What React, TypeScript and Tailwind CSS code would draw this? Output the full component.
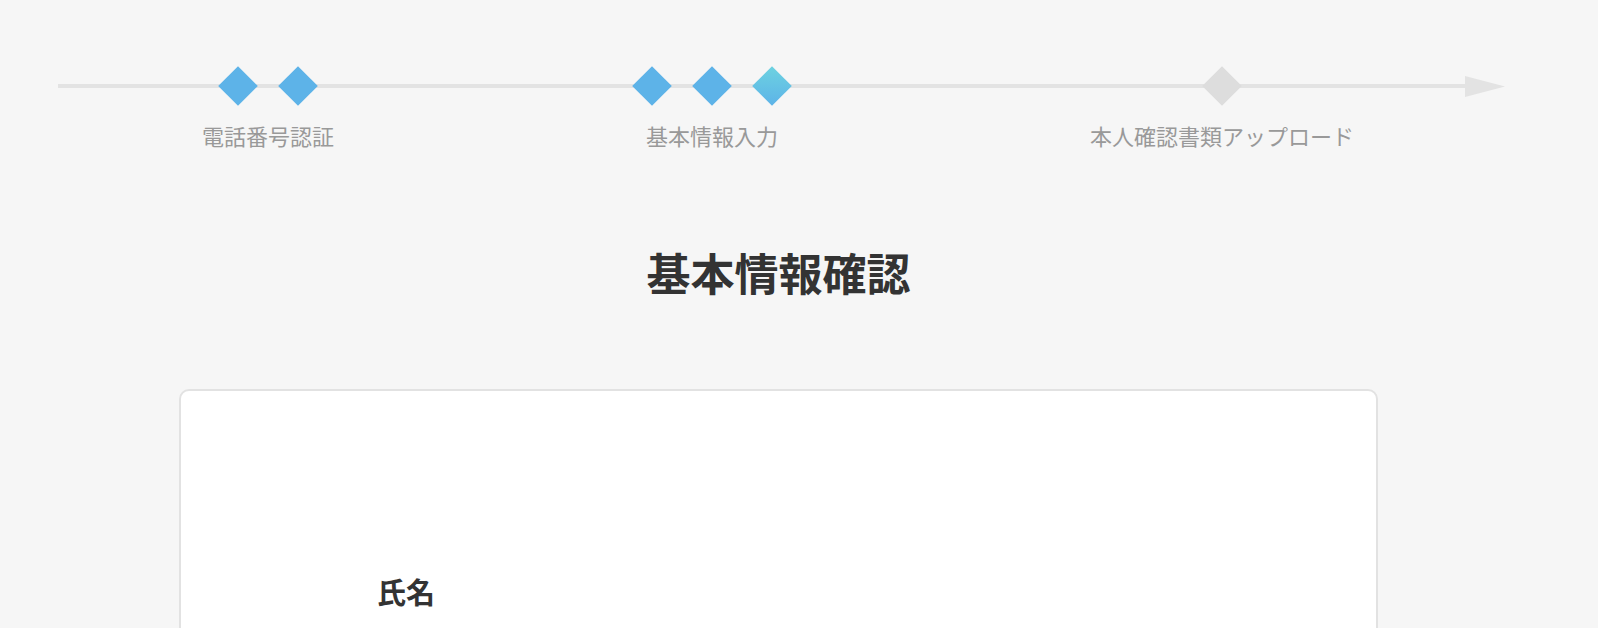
const font = { fontFamily: '"Noto Sans CJK JP", "Noto Sans", sans-serif' };

type Tone = 'blue' | 'active' | 'gray';

const Diamond = ({ tone }: { tone: Tone }) => {
  const color =
    tone === 'blue'
      ? 'bg-[#5db3e8]'
      : tone === 'active'
        ? 'bg-gradient-to-br from-[#6dd2e0] to-[#5db3e8]'
        : 'bg-[#dddddd]';
  return <div className={`w-[28px] h-[28px] rotate-45 ${color}`} />;
};

interface StepProps {
  label: string;
  dots: Tone[];
  width: string;
}

const Step = ({ label, dots, width }: StepProps) => (
  <div className={`flex flex-col items-center shrink-0 ${width}`}>
    <div className="h-[40px] flex items-center gap-[32px]">
      {dots.map((tone, i) => (
        <Diamond key={i} tone={tone} />
      ))}
    </div>
    <p className="mt-[13px] text-[22px] leading-[32px] text-[#999999] whitespace-nowrap">{label}</p>
  </div>
);

const App = () => {
  return (
    <div className="w-[1598px] h-[628px] overflow-hidden bg-[#f6f6f6]" style={font}>
      {/* progress track */}
      <div className="pt-[66px] pl-[58px]">
        <div className="relative w-[1447px]">
          <div className="absolute left-0 right-[40px] top-[18px] h-[4px] bg-[#e3e3e3]" />
          <svg className="absolute right-0 top-[10px]" width="40" height="21" viewBox="0 0 40 21">
            <polygon points="0,0 40,10.5 0,21" fill="#e3e3e3" />
          </svg>
          <div className="relative flex">
            <Step label="電話番号認証" dots={['blue', 'blue']} width="w-[420px]" />
            <Step label="基本情報入力" dots={['blue', 'blue', 'active']} width="w-[468px]" />
            <Step label="本人確認書類アップロード" dots={['gray']} width="w-[552px]" />
          </div>
        </div>
      </div>

      <div className="ml-[179px] w-[1199px]">
        <h1 className="mt-[91px] text-center text-[44px] leading-[60px] font-bold text-[#333333]">基本情報確認</h1>

        <div className="mt-[87px] h-[600px] bg-white border-2 border-[#e2e2e2] rounded-[10px] pt-[180px] pl-[196px]">
          <h2 className="text-[29px] leading-[40px] font-bold text-[#333333]">氏名</h2>
        </div>
      </div>
    </div>
  );
};

export default App;
